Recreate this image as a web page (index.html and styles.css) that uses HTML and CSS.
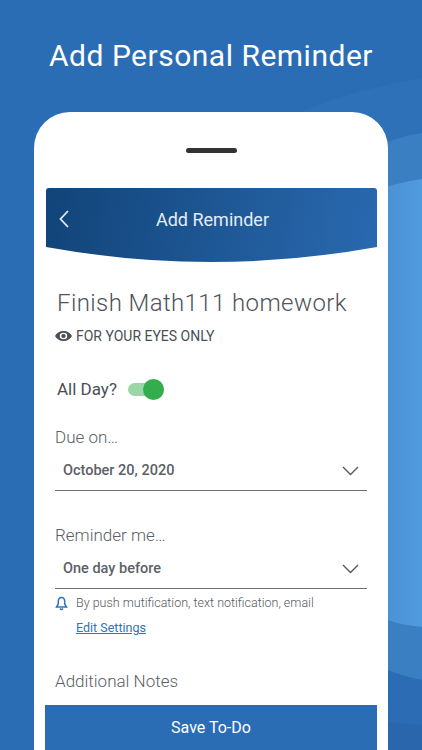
FILE: index.html
```html
<!DOCTYPE html>
<html>
<head>
  <link rel="stylesheet" href="styles.css">
</head>
<body>
<div class="screen">
  <!-- background waves on the right -->
  <svg class="waves" viewBox="0 0 422 750" preserveAspectRatio="none">
    <defs>
      <linearGradient id="lightWave" x1="0" x2="1" y1="0" y2="0">
        <stop offset="0" stop-color="#4a8dcf"/>
        <stop offset="1" stop-color="#4f9bdd"/>
      </linearGradient>
    </defs>
    <path d="M300 112 Q360 88 422 78 L422 750 L300 750 Z" fill="#2e71b8"/>
    <path d="M370 150 Q395 137 422 133 L422 750 L370 750 Z" fill="#3a7fc2"/>
    <path d="M370 192 Q395 183 422 179 L422 627 Q400 625 388 620 L370 612 Z" fill="url(#lightWave)"/>
    <path d="M370 662 Q395 675 422 680 L422 750 L370 750 Z" fill="#2c6cb4"/>
    <path d="M370 720 Q395 723 422 725 L422 750 L370 750 Z" fill="#2a66ac"/>
  </svg>

  <h1 class="headline">Add Personal Reminder</h1>

  <div class="phone">
    <div class="speaker"></div>

    <div class="app-header">
      <svg class="back-icon" width="12" height="20" viewBox="0 0 12 20">
        <path d="M10 2 L2.5 10 L10 18" fill="none" stroke="#e4edf6" stroke-width="1.8"/>
      </svg>
      <span class="app-title">Add Reminder</span>
    </div>

    <div class="form">
      <div class="task-title">Finish Math111 homework</div>
      <div class="privacy">
        <svg width="17" height="10" viewBox="0 0 24 16" preserveAspectRatio="none">
          <path fill="#4a4f55" d="M12 0C6.500 0 2 3.300 0 8c2 4.700 6.500 8 12 8s10-3.300 12-8c-2-4.700-6.500-8-12-8zm0 13.300A5.300 5.300 0 1 1 12 2.700a5.300 5.300 0 0 1 0 10.600zM12 4.800a3.200 3.200 0 1 0 0 6.400 3.200 3.200 0 0 0 0-6.400z"/>
        </svg>
        <span>FOR YOUR EYES ONLY</span>
      </div>

      <div class="allday">
        <span>All Day?</span>
        <div class="toggle"><div class="toggle-knob"></div></div>
      </div>

      <div class="field-label">Due on…</div>
      <div class="select">
        <span>October 20, 2020</span>
        <svg width="17" height="10" viewBox="0 0 17 10">
          <path d="M1 1 L8.500 8.500 L16 1" fill="none" stroke="#555a60" stroke-width="1.400"/>
        </svg>
      </div>

      <div class="field-label second">Reminder me…</div>
      <div class="select">
        <span>One day before</span>
        <svg width="17" height="10" viewBox="0 0 17 10">
          <path d="M1 1 L8.500 8.500 L16 1" fill="none" stroke="#555a60" stroke-width="1.400"/>
        </svg>
      </div>

      <div class="hint">
        <svg width="13" height="15" viewBox="0 0 13 15">
          <path d="M6.500 1.500C4.300 1.500 3.300 3.200 3.300 5.200V8L1.500 11H11.500L9.700 8V5.200C9.700 3.200 8.700 1.500 6.500 1.500Z" fill="none" stroke="#2e74bb" stroke-width="1.500"/>
          <path d="M5 12.500 Q6.500 14.500 8 12.500" fill="none" stroke="#2e74bb" stroke-width="1.300"/>
        </svg>
        <span>By push mutification, text notification, email</span>
      </div>
      <a class="edit-link">Edit Settings</a>

      <div class="field-label notes">Additional Notes</div>
    </div>

    <div class="save-button">Save To-Do</div>
  </div>
</div>
</body>
</html>
```

FILE: styles.css
```css
html, body {
  margin: 0;
  padding: 0;
}

body {
  font-family: Roboto, "Liberation Sans", sans-serif;
}

.screen {
  position: relative;
  width: 422px;
  height: 750px;
  overflow: hidden;
  background-color: #2b6db5;
  display: flex;
  flex-direction: column;
  align-items: center;
}

.waves {
  position: absolute;
  top: 0;
  left: 0;
  width: 422px;
  height: 750px;
}

.headline {
  position: relative;
  margin: 0;
  padding-top: 36px;
  height: 76px;
  box-sizing: border-box;
  font-size: 30px;
  line-height: 40px;
  font-weight: 400;
  color: #fff;
  letter-spacing: 0.5px;
}

.phone {
  position: relative;
  margin-top: 36px;
  width: 354px;
  flex: 1;
  box-sizing: border-box;
  padding-top: 76px;
  background-color: #fff;
  border-radius: 36px 36px 0 0;
  display: flex;
  flex-direction: column;
}

.speaker {
  position: absolute;
  top: 36px;
  left: 152px;
  width: 51px;
  height: 5px;
  border-radius: 3px;
  background-color: #333;
}

.app-header {
  margin: 0 11px 0 12px;
  height: 75px;
  box-sizing: border-box;
  padding: 0 0 13px 12px;
  display: flex;
  align-items: center;
  background: linear-gradient(100deg, #114478, #2a69b0);
  border-radius: 3px 3px 0 0;
  clip-path: path("M0 0H331V59Q165 89 0 59Z");
}

.app-title {
  flex: 1;
  padding-right: 22px;
  text-align: center;
  font-size: 18px;
  color: #e4edf6;
}

.form {
  flex: 1;
  padding: 25px 21px 0;
  color: #4a4f55;
}

.task-title {
  padding-left: 2px;
  font-size: 24px;
  line-height: 30px;
  font-weight: 300;
  color: #4e5359;
  letter-spacing: 0.4px;
}

.privacy {
  margin-top: 10px;
  display: flex;
  align-items: center;
  gap: 4px;
  font-size: 14px;
  line-height: 16px;
  color: #4a4f55;
}

.allday {
  margin-top: 33px;
  padding-left: 2px;
  display: flex;
  align-items: center;
  gap: 11px;
  height: 24px;
  font-size: 17px;
}

.toggle {
  position: relative;
  width: 36px;
  height: 13px;
  border-radius: 7px;
  background-color: #9ad7a8;
}

.toggle-knob {
  position: absolute;
  top: -4px;
  right: 0;
  width: 21px;
  height: 21px;
  border-radius: 50%;
  background-color: #34ad4e;
}

.field-label {
  margin-top: 25px;
  font-size: 17px;
  line-height: 22px;
  font-weight: 300;
  color: #5a5f65;
}

.field-label.second {
  margin-top: 33px;
}

.field-label.notes {
  margin-top: 34px;
}

.select {
  margin-top: 3px;
  height: 40px;
  box-sizing: border-box;
  padding: 0 8px;
  display: flex;
  align-items: center;
  justify-content: space-between;
  border-bottom: 1px solid #6e7276;
  font-size: 14.500px;
  font-weight: 500;
  color: #5c6167;
}

.hint {
  margin-top: 6px;
  display: flex;
  align-items: center;
  gap: 8px;
  font-size: 12.500px;
  line-height: 16px;
  font-weight: 300;
  color: #555a60;
}

.edit-link {
  display: block;
  margin: 9px 0 0 21px;
  font-size: 12.500px;
  line-height: 16px;
  color: #2e74bb;
  text-decoration: underline;
}

.save-button {
  margin: 0 11px 0 11px;
  height: 45px;
  flex-shrink: 0;
  display: flex;
  align-items: center;
  justify-content: center;
  background-color: #2b6db5;
  color: #fff;
  font-size: 16px;
}
```
